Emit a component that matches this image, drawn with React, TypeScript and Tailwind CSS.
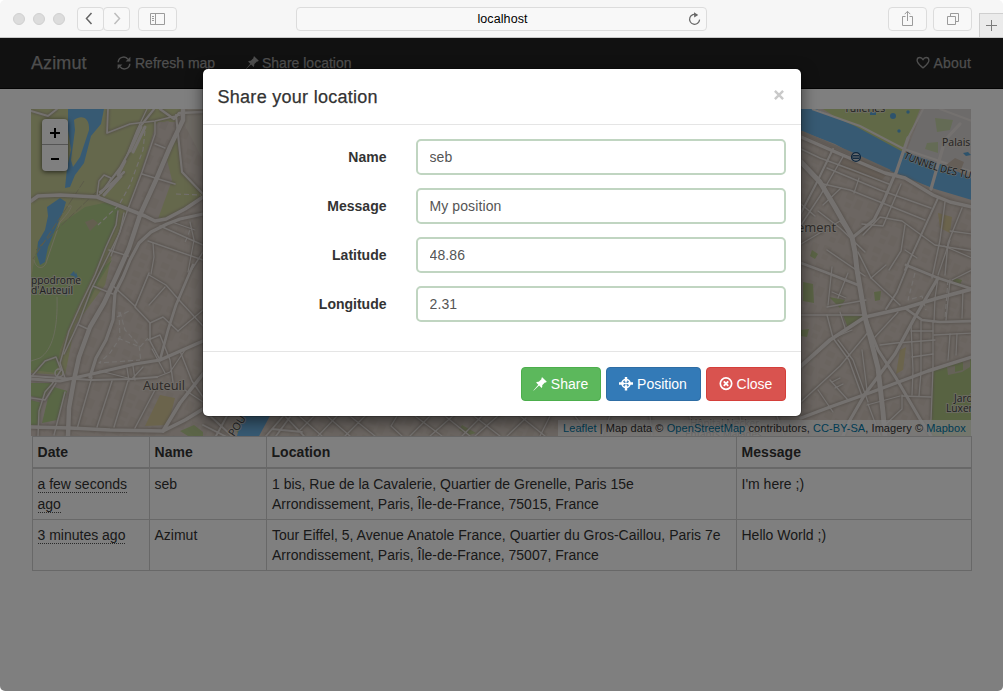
import React from "react";

type Road = [string, number];

const majorRoads: Road[] = [
  ["M183 109 183 120 170 147 156 180 140 215 129 248 117 275 104 303 90 327 79 357 74 380 69 408 68 436", 5],
  ["M203 214 180 219 167 224 151 232 139 243 130 260 123 277 115 293 113 320 106 340 96 358 90 377", 3.6],
  ["M31 201 38 196 60 195 97 197 130 210 145 216 155 221 166 219 185 209 203 197", 4],
  ["M31 379 60 381 92 374 135 364 160 360 203 341", 3.6],
  ["M31 376 60 378 92 380 132 379 157 377", 2.4],
  ["M31 427 70 428 110 430 163 431 185 420 203 409", 4],
  ["M163 431 180 403 203 374", 4],
  ["M193 265 176 305 168 330 160 360", 3],
  ["M801 162 820 182 835 207 852 237 855 252 857 270 865 317 878 368 883 412 885 436", 5.5],
  ["M801 366 830 340 865 317 905 308 938 298 972 289", 4.2],
  ["M801 418 830 407 872 392 928 371 972 357", 3.8],
  ["M938 278 915 317 895 354 865 394 850 420 843 436", 3.6],
  ["M865 317 878 350 896 378 920 419 931 436", 3.4],
  ["M801 137 840 154 885 173 905 178 933 195 950 202 972 207", 3.8],
  ["M801 263 825 272 858 285", 3],
  ["M895 174 884 200 874 220 852 238", 3.4],
  ["M906 265 938 278 972 289", 3],
  ["M905 308 922 320 940 322 972 321", 3],
  ["M160 109 174 119 179 113 203 112", 2.6],
];

const roads: Road[] = [
  ["M31 111 48 116 57 109", 2.4],
  ["M108 109 107 133 130 124 155 121 180 115", 2.2],
  ["M154 109 139 128 129 152 120 168 101 193", 2.6],
  ["M147 109 137 130 127 155", 1.6],
  ["M100 192 110 185 124 172", 3],
  ["M97 196 99 181 104 175 111 178 107 187 98 196", 1.8],
  ["M176 115 182 172 203 194", 2.6],
  ["M142 174 175 184", 2],
  ["M155 122 155 134 142 172 129 206 111 256", 1.8],
  ["M155 144 165 148", 1.8],
  ["M118 211 116 225 106 247 95 275 82 302 69 331 60 363 65 378", 1.8],
  ["M124 213 120 232 108 256 91 290 79 322 64 354", 1.8],
  ["M109 250 128 256", 2],
  ["M111 284 135 306", 2],
  ["M93 286 113 294", 2],
  ["M79 325 90 330", 2],
  ["M31 377 45 361 56 357 61 370 52 384 45 392 39 411 38 436", 1.8],
  ["M65 392 54 435", 1.8],
  ["M92 377 77 429", 1.8],
  ["M112 381 97 427", 1.8],
  ["M128 381 114 427", 1.8],
  ["M157 386 135 428", 1.8],
  ["M31 398 45 400 56 383", 1.8],
  ["M149 273 135 307 150 323 150 341 160 360", 2],
  ["M149 275 166 285 180 301 203 326", 1.8],
  ["M150 323 163 317 178 331", 1.8],
  ["M165 287 149 305", 1.5],
  ["M148 340 160 335 170 360 173 382", 1.8],
  ["M152 349 165 373", 1.6],
  ["M178 331 203 310", 1.6],
  ["M180 351 192 381 203 397", 1.8],
  ["M100 371 132 379 143 367", 1.6],
  ["M127 368 129 381", 1.6],
  ["M133 366 135 380", 1.6],
  ["M157 377 170 372 185 350", 1.6],
  ["M185 390 203 402", 1.8],
  ["M148 241 203 260", 1.8],
  ["M160 226 203 245", 1.8],
  ["M153 243 154 257 151 274", 1.6],
  ["M172 222 195 230", 1.5],
  ["M190 222 194 240 188 272", 1.5],
  ["M203 252 190 272", 1.8],
  ["M833 149 816 184 801 213", 2.6],
  ["M844 155 820 196 801 225", 1.8],
  ["M801 149 820 158 850 169 889 184", 1.8],
  ["M819 183 850 190 900 210 925 220", 1.8],
  ["M827 168 880 190 931 208", 1.8],
  ["M859 178 854 193", 1.6],
  ["M901 184 883 226 862 224", 1.8],
  ["M938 198 922 233 905 270", 2.4],
  ["M818 211 840 228 865 252", 1.8],
  ["M815 216 801 204", 1.8],
  ["M841 188 823 205", 1.6],
  ["M801 244 840 221 851 236", 1.6],
  ["M863 235 880 217 902 221 935 245 972 251", 1.8],
  ["M905 225 901 251 889 270", 1.8],
  ["M905 250 917 258", 1.6],
  ["M945 202 940 240 932 278", 1.8],
  ["M962 208 948 243 945 275", 1.8],
  ["M950 231 972 234", 1.6],
  ["M944 246 972 258", 1.6],
  ["M827 250 865 276", 1.8],
  ["M832 267 828 305", 1.6],
  ["M801 315 865 315", 1.6],
  ["M827 307 866 300", 1.6],
  ["M848 273 838 298", 1.6],
  ["M832 292 846 298", 1.5],
  ["M858 252 871 278 900 305", 1.8],
  ["M871 278 886 265", 1.6],
  ["M908 265 897 292 886 309", 2.4],
  ["M827 315 833 338 849 360 862 396", 1.8],
  ["M840 312 846 331", 1.6],
  ["M833 338 852 330", 1.6],
  ["M838 340 853 360 868 402", 1.6],
  ["M862 350 867 390", 1.6],
  ["M870 330 840 366 801 402", 1.8],
  ["M818 390 833 412", 1.6],
  ["M830 380 848 400", 1.6],
  ["M832 382 840 378", 1.6],
  ["M835 388 843 384", 1.6],
  ["M898 312 875 337", 1.6],
  ["M880 345 896 343 935 340", 1.6],
  ["M911 324 913 370 912 395", 1.6],
  ["M921 321 921 372 919 396", 1.6],
  ["M933 322 933 368 931 420", 1.6],
  ["M911 331 933 331", 1.6],
  ["M912 357 933 354", 1.6],
  ["M934 335 972 333", 1.6],
  ["M950 334 948 360", 1.6],
  ["M957 334 956 355", 1.6],
  ["M902 396 931 397", 1.6],
  ["M902 395 902 409 886 424", 1.6],
  ["M867 405 900 396", 1.6],
  ["M868 404 880 436", 1.6],
  ["M938 278 935 298 934 322", 1.6],
  ["M950 280 946 320", 1.6],
  ["M963 290 962 318", 1.6],
  ["M938 275 950 240", 1.6],
  ["M972 270 952 280", 1.6],
  ["M203 425 225 436M208 414 232 436M228 414 216 436", 2.4],
  ["M285 414 266 436M290 417 276 436M272 429 302 432M285 416 304 436", 2.2],
  ["M297 414 322 436M314 416 300 430M339 414 318 436M327 416 350 436", 1.7],
  ["M367 414 345 436M350 416 375 436M391 426 402 436M397 416 391 426M430 416 410 436", 1.7],
  ["M415 416 442 436M455 414 430 436M445 416 470 436M482 416 462 436", 1.7],
  ["M500 414 475 436M474 416 500 436M526 418 507 436M520 416 545 436", 1.7],
  ["M550 416 540 436M575 416 590 436M610 416 602 436M650 416 652 436M690 416 694 436M740 416 743 436M777 416 784 436", 1.7],
];

const dashedPaths = [
  "M145 131 143 150 130 185 119 205 98 225",
  "M176 194 201 195",
  "M120 312 125 330 139 345 141 362",
  "M117 317 129 311",
  "M119 312 120 338 110 353 99 363 140 360",
  "M118 338 140 347 148 338",
  "M190 230 184 245",
  "M915 273 908 300 922 296 926 310",
  "M948 280 945 318",
];

function ParisMap() {
  return (
    <svg
      viewBox="31 109 940 327"
      width="940"
      height="327"
      className="block shrink-0"
      fontFamily="'Open Sans', 'Noto Sans', sans-serif"
    >
      <defs>
        <pattern id="buildings" width="23" height="19" patternUnits="userSpaceOnUse" patternTransform="rotate(24)">
          <path d="M2 2h8v6H2zM13 4h7v10h-7zM4 11h6v5H4z" fill="#cdc1b8" />
        </pattern>
        <filter id="halo" x="-5%" y="-5%" width="110%" height="110%">
          <feGaussianBlur stdDeviation="1.2" />
        </filter>
        <path id="tunnel" d="M903 158Q935 174 1000 184" />
      </defs>
      <rect x="31" y="109" width="940" height="327" fill="#d8cdc4" />
      <rect x="31" y="109" width="940" height="327" fill="url(#buildings)" opacity=".4" />

      {/* Bois de Boulogne */}
      <path d="M31 109H183L176 122 158 122 129 206 112 255 105 285 75 325 65 375 31 373Z" fill="#cbd099" />
      <path d="M165 152 177 135 181 170 203 192V198L165 219 158 219 172 180Z" fill="#cbd099" />
      <path d="M180 116 203 160V109H183Z" fill="#ddd5c8" />
      <path d="M156 124 168 121 177 126 163 155 141 215 128 253 111 260 130 209Z" fill="#d8cdc4" />
      <path d="M156 124 168 121 177 126 163 155 141 215 128 253 111 260 130 209Z" fill="url(#buildings)" opacity=".5" />
      <path d="M38 242C50 228 65 222 85 207L108 202 120 205 116 225 93 275 74 315 60 350 57 373 31 370V278Z" fill="#b2cf8b" />
      <path d="M31 383 53 383 43 399 31 396ZM48 398 54 387 67 391 57 420 42 423ZM100 270 112 260 98 283 79 322Z" fill="#b2cf8b" />
      <path d="M31 400 42 403 38 425H31Z" fill="#b2cf8b" />
      <path d="M85 222 93 219 98 223 90 231Z" fill="#c8bfa1" />
      <path d="M57 297C58 330 52 350 40 358L31 361" fill="none" stroke="#d5dab7" strokeWidth="1" />
      <path d="M68 207C75 202 70 212 60 222L47 260C45 270 36 270 34 260" fill="none" stroke="#ded9ba" strokeWidth="1" />
      <path d="M68 109H104L101 124 91 136 84 163 75 175 70 187 65 188 67 168 71 150 68 130Z" fill="#6fb4e6" />
      <path d="M74 120C82 114 90 118 89 130L80 157 73 167 71 160 75 130Z" fill="#cbd099" />
      <path d="M47 207 60 198 66 202 63 212 55 230 48 247 45 262 40 265 37 255 38 242 45 230 48 216Z" fill="#6fb4e6" />
      <path d="M70 275 74 271 76 277ZM76 272 78 278 74 279ZM64 288 68 291 66 297Z" fill="#6fb4e6" />
      <path d="M84 181 33 259M96 192 36 250" stroke="#b8b691" strokeWidth="1" strokeDasharray="8 2" />

      {/* Right bank and garden patches */}
      <path d="M823 109H920L903 152 865 136Z" fill="#c3d38e" />
      <path d="M923 109H972V175L905 155Z" fill="#dad6d5" />
      <path d="M935 118 953 120 950 130 937 132ZM927 143 938 142 938 153 925 149Z" fill="#c9d6aa" />
      <path d="M801 109H816L855 126 903 152 938 163 972 178V200L935 189 895 173 860 158 835 144 801 131Z" fill="#6fb4e6" />
      <g fill="#5ba6d8">
        <circle cx="893" cy="116" r="3" />
        <circle cx="908" cy="112" r="1.7" />
        <circle cx="899" cy="131" r="1.7" />
        <path d="M870 112h6v3h-6zM963 153l5-1 3 3-5 1z" />
      </g>
      <path d="M812 109 860 126 904 149 972 172" fill="none" stroke="#ece7e2" strokeWidth="2" />
      <path d="M801 132 850 153 890 171" fill="none" stroke="#c5bbb2" strokeWidth="3" />
      <path d="M843 157 863 160 888 173 880 182 840 168ZM946 165 955 158 964 162 960 172 970 178" fill="#cbbcae" />
      <path d="M843 315 864 316 848 328ZM829 297 845 300 840 308ZM803 282 813 284 814 303 803 301ZM801 330 809 329 807 337 801 336ZM874 292 881 291 880 300 875 301ZM812 250 818 254 815 259 810 256ZM955 278 962 280 960 285 952 281Z" fill="#b5c68a" />
      <path d="M933 369 972 357V436H930Z" fill="#b1c785" />
      <path d="M947 367 955 366 955 372 963 370 963 360 970 358 970 367 962 372 948 375Z" fill="#cbc4b0" />
      <path d="M900 350 906 347 903 370 896 374ZM938 213 952 217 950 233 940 228ZM160 395 175 398 168 425 145 426Z" fill="#d6c899" />
      <path d="M180 431 194 425 203 432V436H188ZM236 430 244 416 239 436ZM462 425 476 433 469 435 459 430Z" fill="#b9ca90" />
      <path d="M243 414H271L259 436H237Z" fill="#6fb4e6" />

      {/* Street casings and fills */}
      <g fill="none" stroke="#a0968d" strokeLinejoin="round" filter="url(#halo)" opacity=".65">
        {[...roads, ...majorRoads].map(([d, w], i) => (
          <path key={i} d={d} strokeWidth={w + 1.5} />
        ))}
      </g>
      <g fill="none" stroke="#e9e3df" strokeLinejoin="round" strokeLinecap="round">
        {roads.map(([d, w], i) => (
          <path key={i} d={d} strokeWidth={w * 0.8} />
        ))}
        {majorRoads.map(([d, w], i) => (
          <path key={i} d={d} strokeWidth={w * 0.9} />
        ))}
        <g strokeWidth="1.1" strokeDasharray="5 3" strokeLinecap="butt">
          {dashedPaths.map((d, i) => (
            <path key={i} d={d} />
          ))}
        </g>
        <path d="M141 127 130 151M145 127 133 152M125 161 118 175M121 176 104 195" strokeWidth="3" />
        <path d="M908 138 896 173M960 124 945 140 931 189" strokeWidth="3.2" />
        <path d="M923 109 907 140M940 109 972 121" strokeWidth="2" />
        <ellipse cx="59" cy="373" rx="4" ry="4" strokeWidth="1.5" />
      </g>

      <g fill="#3f4345" stroke="#e2dcd3" strokeOpacity=".8" strokeWidth="2" paintOrder="stroke" strokeLinejoin="round" fontWeight="500">
        <text x="31" y="284" fontSize="10.2" textLength="50" lengthAdjust="spacingAndGlyphs">ppodrome</text>
        <text x="31" y="294" fontSize="10.2" textLength="42" lengthAdjust="spacingAndGlyphs">d'Auteuil</text>
        <text x="143" y="390" fontSize="12.8" fill="#5c5550">Auteuil</text>
        <text x="844" y="112" fontSize="10.5">Tuileries</text>
        <text x="942" y="146" fontSize="10.5" fill="#4a4644">Palais</text>
        <text x="797" y="232" fontSize="12.8" textLength="39" lengthAdjust="spacingAndGlyphs" fill="#5c5550">ement</text>
        <text fontSize="10.2" strokeWidth="1.4" fill="#2f3335"><textPath href="#tunnel" textLength="71" lengthAdjust="spacingAndGlyphs">TUNNEL DES TU</textPath></text>
        <text x="954" y="402" fontSize="10.2">Jard</text>
        <text x="946" y="412" fontSize="10.2">Luxer</text>
        <text x="234" y="437" fontSize="10.5" transform="rotate(-57 234 437)">POU</text>
        <text x="690" y="427" fontSize="10" fill="#77706b">Hôpital Necker</text>
        <text x="685" y="438" fontSize="10" fill="#77706b">Enfants Malades</text>
      </g>
      <circle cx="856" cy="157" r="4.4" fill="#d5dce2" stroke="#1f4e7b" strokeWidth="1.4" />
      <path d="M853 155.5h6v3h-6zM855 155.5v3M857 155.5v3" fill="none" stroke="#1f4e7b" strokeWidth=".9" />
    </svg>
  );
}

const glyph = "inline-block h-3.5 w-3.5 shrink-0";

function RefreshIcon() {
  return (
    <svg viewBox="0 0 14 14" className={glyph} fill="none" stroke="currentColor" strokeWidth="1.5">
      <path d="M1.2 6.3A5.4 5.4 0 0 1 11 3.4M12.8 7.7A5.4 5.4 0 0 1 3 10.6" />
      <path d="M13.4.8V5.6H8.6ZM.6 13.2V8.4H5.4Z" fill="currentColor" stroke="none" />
    </svg>
  );
}

function PushpinIcon() {
  return (
    <svg viewBox="0 0 14 14" className={glyph} fill="currentColor" stroke="none">
      <path d="M9.2.2 13.8 4.8 12.9 5.6 11.9 5.4 9.2 8.2C9.5 9.2 9.2 10.3 8.6 10.9L6.1 8.6 1.1 13.2.1 13.9.8 12.9 5.3 7.8 3.1 5.4C3.8 4.8 4.8 4.6 5.8 4.8L8.6 2.1 8.4 1.1Z" />
    </svg>
  );
}

function HeartIcon() {
  return (
    <svg viewBox="0 0 14 14" className={glyph} fill="none" stroke="currentColor" strokeWidth="1.35" strokeLinejoin="round">
      <path d="M7 12C6.2 10.8 1.1 7.9 1.1 4.3 1.1 2.4 2.4 1.5 3.9 1.5 5.2 1.5 6.3 2.2 7 3.8 7.7 2.2 8.8 1.5 10.1 1.5 11.6 1.5 12.9 2.4 12.9 4.3 12.9 7.9 7.8 10.8 7 12Z" />
    </svg>
  );
}

function CrosshairIcon() {
  return (
    <svg viewBox="0 0 14 14" className={glyph} fill="none" stroke="currentColor">
      <circle cx="7" cy="6.5" r="4" strokeWidth="1.6" />
      <path d="M7 -.5V4.7M7 8.3V13.5M0 6.5H5.2M8.8 6.5H14" strokeWidth="2.4" />
      <path d="M7 4.5V8.5M5 6.5H9" strokeWidth="1" />
    </svg>
  );
}

function RemoveCircleIcon() {
  return (
    <svg viewBox="0 0 14 14" className={glyph} fill="none" stroke="currentColor">
      <circle cx="7" cy="6.6" r="5.7" strokeWidth="1.7" />
      <path d="M4.8 4.4 9.2 8.8M9.2 4.4 4.8 8.8" strokeWidth="1.9" />
    </svg>
  );
}

function BrowserBar() {
  return (
    <header className="flex h-[38px] shrink-0 items-center border-b border-[#c8c8c8] bg-[#f6f6f6] pl-[13px]">
      <div className="flex w-16 gap-2">
        <span className="h-3 w-3 rounded-full border border-[#d0d0d0] bg-[#dcdcdc]" />
        <span className="h-3 w-3 rounded-full border border-[#d0d0d0] bg-[#dcdcdc]" />
        <span className="h-3 w-3 rounded-full border border-[#d0d0d0] bg-[#dcdcdc]" />
      </div>
      <div className="flex">
        <button className="flex h-6 w-[27px] items-center justify-center rounded border border-[#dcdcdc] bg-[#f8f8f8] text-[#656565]">
          <svg width="8" height="13" viewBox="0 0 8 13" fill="none" stroke="currentColor" strokeWidth="1.5" className="-ml-1"><path d="M6.5 1 1.5 6.5 6.5 12" /></svg>
        </button>
        <button className="-ml-px flex h-6 w-[27px] items-center justify-center rounded border border-[#dcdcdc] bg-[#f8f8f8] text-[#bdbdbd]">
          <svg width="8" height="13" viewBox="0 0 8 13" fill="none" stroke="currentColor" strokeWidth="1.5"><path d="M1.5 1 6.5 6.5 1.5 12" /></svg>
        </button>
      </div>
      <button className="ml-2 flex h-6 w-[39px] items-center justify-center rounded border border-[#dcdcdc] bg-[#f8f8f8] text-[#9b9b9b]">
        <svg width="15" height="12" viewBox="0 0 15 12" fill="none" stroke="currentColor"><path d="M.5.5H14.5V11.5H.5ZM5.5.5V11.5M2 3.5H4M2 5.5H4M2 7.5H4" /></svg>
      </button>
      <div className="ml-[119px] flex h-6 w-[411px] items-center rounded border border-[#dcdcdc] bg-[#f8f8f8] pr-[5px]">
        <span className="flex-1 pt-px pl-5 text-center text-[12.5px] tracking-[0.1px] text-black">localhost</span>
        <svg width="13" height="14" viewBox="0 0 13 14" fill="none" stroke="#686868" strokeWidth="1.2">
          <path d="M9 2.9A5 5 0 1 0 11.6 7.6" />
          <path d="M6 .2 10.2 3 6.2 5.4Z" fill="#686868" stroke="none" />
        </svg>
      </div>
      <button className="ml-[181px] flex h-6 w-[39px] items-center justify-center rounded border border-[#dcdcdc] bg-[#f8f8f8] text-[#9b9b9b]">
        <svg width="11" height="16" viewBox="0 0 11 16" fill="none" stroke="currentColor" className="-mt-0.5"><path d="M3.5 6.5H.5V15.5H10.5V6.5H7.5M5.5 11V1.5M2.7 4.2 5.5 1.3 8.3 4.2" /></svg>
      </button>
      <button className="ml-1.5 flex h-6 w-[39px] items-center justify-center rounded border border-[#dcdcdc] bg-[#f8f8f8] text-[#9b9b9b]">
        <svg width="12" height="12" viewBox="0 0 12 12" fill="none" stroke="currentColor"><path d="M.5 3.5H8.5V11.5H.5ZM3.5 3.5V.5H11.5V8.5H8.5" /></svg>
      </button>
      <button className="ml-[7px] flex h-6 flex-1 items-center justify-center self-end border-t border-l border-[#cfcfcf] bg-[#ebebeb] text-[#7b7b7b]">
        <svg width="11" height="11" viewBox="0 0 11 11" stroke="currentColor"><path d="M5.5 0V11M0 5.5H11" /></svg>
      </button>
    </header>
  );
}

const positions = [
  { date: "a few seconds ago", name: "seb", location: "1 bis, Rue de la Cavalerie, Quartier de Grenelle, Paris 15e Arrondissement, Paris, Île-de-France, 75015, France", message: "I'm here ;)" },
  { date: "3 minutes ago", name: "Azimut", location: "Tour Eiffel, 5, Avenue Anatole France, Quartier du Gros-Caillou, Paris 7e Arrondissement, Paris, Île-de-France, 75007, France", message: "Hello World ;)" },
];

const fields = [
  { label: "Name", value: "seb" },
  { label: "Message", value: "My position" },
  { label: "Latitude", value: "48.86" },
  { label: "Longitude", value: "2.31" },
];

function PositionsTable() {
  return (
    <table className="ml-px w-[940px] table-fixed border-separate border-spacing-0 border-t border-r border-[#d0d0d0] text-left">
      <colgroup>
        <col className="w-[117px]" />
        <col className="w-[117px]" />
        <col className="w-[470px]" />
        <col />
      </colgroup>
      <thead>
        <tr>
          {["Date", "Name", "Location", "Message"].map((h) => (
            <th key={h} className="border-b-2 border-l border-[#d0d0d0] p-[5px] pl-[4.5px] font-bold tracking-[0.05px]">{h}</th>
          ))}
        </tr>
      </thead>
      <tbody className="align-top">
        {positions.map((p) => (
          <tr key={p.name}>
            <td className="border-b border-l border-[#d0d0d0] p-[5px] pl-[4.5px]">
              <span className="border-b border-dotted border-[#555]">{p.date}</span>
            </td>
            <td className="border-b border-l border-[#d0d0d0] p-[5px] pl-[4.5px]">{p.name}</td>
            <td className="border-b border-l border-[#d0d0d0] p-[5px]">{p.location}</td>
            <td className="border-b border-l border-[#d0d0d0] p-[5px] pl-[4.5px]">{p.message}</td>
          </tr>
        ))}
      </tbody>
    </table>
  );
}

function ShareDialog() {
  return (
    <div role="dialog" className="w-[600px] rounded-md border border-black/20 bg-white bg-clip-padding shadow-[0_5px_15px_rgba(0,0,0,0.5)]">
      <div className="flex h-14 items-center justify-between border-b border-[#e5e5e5] px-[15px]">
        <h4 className="text-[18px] tracking-[0.28px] [-webkit-text-stroke:0.25px_#333]">Share your location</h4>
        <button className="-mt-1 pr-0.5 text-[#c9c9c9]" aria-label="Close">
          <svg width="10" height="10" viewBox="0 0 10 10" stroke="currentColor" strokeWidth="2.4"><path d="M.9.9 9.1 9.1M9.1.9.9 9.1" /></svg>
        </button>
      </div>
      <form className="flex h-[226px] flex-col gap-[13px] px-[15px] pt-3.5">
        {fields.map((f) => (
          <div key={f.label} className="flex items-center">
            <label className="w-[169px] text-right font-bold">{f.label}</label>
            <input
              readOnly
              value={f.value}
              className="ml-[29px] h-9 w-[370px] rounded-[5px] border-2 border-[#c0d5c1] px-3 tracking-[0.1px] text-[#555] outline-none"
            />
          </div>
        ))}
      </form>
      <div className="flex h-[65px] justify-end gap-[5px] border-t border-[#e5e5e5] px-[15px] pt-[15px] text-white">
        <button className="flex h-[34px] w-20 items-center justify-center gap-1 rounded border border-[#4cae4c] bg-[#5cb85c]"><PushpinIcon />Share</button>
        <button className="flex h-[34px] w-[95px] items-center justify-center gap-1 rounded border border-[#2e6da4] bg-[#337ab7]"><CrosshairIcon />Position</button>
        <button className="flex h-[34px] w-20 items-center justify-center gap-1 rounded border border-[#d43f3a] bg-[#d9534f]"><RemoveCircleIcon />Close</button>
      </div>
    </div>
  );
}

export default function App() {
  return (
    <div className="h-[691px] w-[1003px] bg-white">
      <div className="flex h-full flex-col overflow-hidden rounded-[5px] bg-white font-['Helvetica_Neue','Liberation_Sans',sans-serif] text-[14px] leading-5 text-[#333]">
        <BrowserBar />
        <div className="relative flex-1">
          <nav className="flex h-[51px] items-center border-b border-[#080808] bg-[#222] pr-8 pl-[31px] text-[#9d9d9d] [-webkit-text-stroke:0.25px_#9d9d9d]">
            <span className="w-[86px] text-[18px] tracking-[0.1px]">Azimut</span>
            <a className="flex w-[128px] items-center gap-1"><RefreshIcon />Refresh map</a>
            <a className="flex items-center gap-[3px]"><PushpinIcon />Share location</a>
            <a className="ml-auto flex items-center gap-[3px] tracking-[0.2px]"><HeartIcon />About</a>
          </nav>
          <main className="flex flex-col pt-5 pl-[31px]">
            <div className="relative">
              <ParisMap />
              <div className="absolute top-2.5 left-[11px] w-[26px] divide-y divide-[#aaa] rounded bg-white text-black shadow-[0_1px_5px_rgba(0,0,0,0.65)]">
                <button className="flex h-[26px] w-full items-center justify-center pt-0.5"><svg width="10" height="10" stroke="currentColor" strokeWidth="2"><path d="M5 0V10M0 5H10" /></svg></button>
                <button className="flex h-[26px] w-full items-center justify-center pt-0.5"><svg width="8" height="2" stroke="currentColor" strokeWidth="2"><path d="M0 1H8" /></svg></button>
              </div>
              <div className="absolute top-[311px] left-[527px] h-4 w-[413px] bg-white/70 px-[5px] text-[11px] leading-4 tracking-[0.075px] whitespace-nowrap text-[#333]">
                <span className="text-[#0078a8]">Leaflet</span> | Map data © <span className="text-[#0078a8]">OpenStreetMap</span> contributors, <span className="text-[#0078a8]">CC-BY-SA</span>, Imagery © <span className="text-[#0078a8]">Mapbox</span>
              </div>
            </div>
            <PositionsTable />
          </main>
          <div className="absolute inset-0 flex items-start justify-center bg-black/50 pt-[30px]">
            <ShareDialog />
          </div>
        </div>
      </div>
    </div>
  );
}
